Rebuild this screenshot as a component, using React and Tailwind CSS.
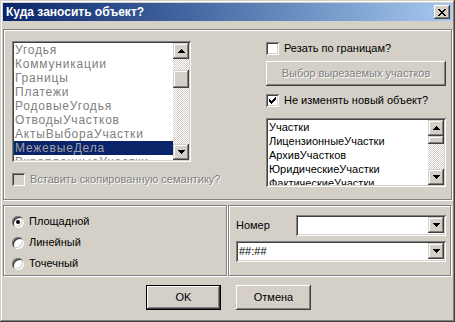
const raised = 'shadow-[inset_-1px_-1px_#404040,inset_1px_1px_#fff,inset_-2px_-2px_#808080,inset_2px_2px_#d4d0c8]';
const raisedScroll = 'shadow-[inset_-1px_-1px_#404040,inset_1px_1px_#d4d0c8,inset_-2px_-2px_#808080,inset_2px_2px_#fff]';
const sunken = 'shadow-[inset_1px_1px_#808080,inset_-1px_-1px_#fff,inset_2px_2px_#404040,inset_-2px_-2px_#d4d0c8]';
const etched = 'border border-[#808080] shadow-[inset_1px_1px_#fff,1px_1px_#fff]';
const dither = 'bg-[repeating-conic-gradient(#d4d0c8_0_25%,#fff_0_50%)] bg-[length:2px_2px]';
const disabledText = 'text-[#808080] [text-shadow:1px_1px_0_#fff]';

function Pixels({ rows, color = '#000' }) {
    const h = rows.length;
    const w = rows[0].length;
    return (
        <svg width={w} height={h} viewBox={`0 0 ${w} ${h}`} shapeRendering="crispEdges">
            {rows.map((r, y) =>
                r.split('').map((c, x) => (c === 'x' ? <rect key={`${x}-${y}`} x={x} y={y} width="1" height="1" fill={color} /> : null))
            )}
        </svg>
    );
}

const UP = ['...x...', '..xxx..', '.xxxxx.', 'xxxxxxx'];
const DOWN = ['xxxxxxx', '.xxxxx.', '..xxx..', '...x...'];
const CLOSE = ['xx....xx', '.xx..xx.', '..xxxx..', '...xx...', '..xxxx..', '.xx..xx.', 'xx....xx'];
const CHECK = ['......x', '.....xx', 'x...xxx', 'xx.xxx.', 'xxxxx..', '.xxx...', '..x....'];

function ScrollBtn({ dir }) {
    return (
        <div className={`w-[16px] h-[16px] shrink-0 bg-[#d4d0c8] flex items-center justify-center ${raisedScroll}`}>
            <Pixels rows={dir === 'up' ? UP : DOWN} />
        </div>
    );
}

function Scrollbar({ before, thumb }) {
    return (
        <div className="w-[16px] flex flex-col shrink-0">
            <ScrollBtn dir="up" />
            <div className={`${dither}`} style={{ height: before }} />
            <div className={`w-[16px] bg-[#d4d0c8] ${raisedScroll}`} style={{ height: thumb }} />
            <div className={`flex-1 ${dither}`} />
            <ScrollBtn dir="down" />
        </div>
    );
}

function Checkbox({ label, checked, disabled }) {
    return (
        <div className="flex items-center h-[13px]">
            <div className={`w-[13px] h-[13px] p-[3px] shrink-0 ${disabled ? 'bg-[#d4d0c8]' : 'bg-white'} ${sunken}`}>
                {checked && <Pixels rows={CHECK} />}
            </div>
            <span className={`ml-[5px] whitespace-nowrap ${disabled ? disabledText : 'text-black'}`}>{label}</span>
        </div>
    );
}

function Radio({ label, checked }) {
    return (
        <div className="flex items-center h-[13px]">
            <div className="w-[12px] h-[12px] rounded-full bg-white shrink-0 flex items-center justify-center shadow-[inset_1px_1px_#808080,inset_-1px_-1px_#fff,inset_2px_2px_#404040,inset_-2px_-2px_#d4d0c8]">
                {checked && <div className="w-[4px] h-[4px] rounded-full bg-black" />}
            </div>
            <span className="ml-[5px] whitespace-nowrap">{label}</span>
        </div>
    );
}

function Combo({ width, value }) {
    return (
        <div className={`h-[21px] p-[2px] bg-white flex ${sunken}`} style={{ width }}>
            <div className="flex-1 pl-[1px] leading-[17px] overflow-hidden whitespace-nowrap">{value}</div>
            <ScrollBtn dir="down" />
        </div>
    );
}

const leftItems = ['Угодья', 'Коммуникации', 'Границы', 'Платежи', 'РодовыеУгодья', 'ОтводыУчастков', 'АктыВыбораУчастки', 'МежевыеДела', 'ВкрапленныеУчастки'];
const rightItems = ['Участки', 'ЛицензионныеУчастки', 'АрхивУчастков', 'ЮридическиеУчастки', 'ФактическиеУчастки'];

export default function App() {
    return (
        <div className="w-[455px] h-[322px] bg-[#d4d0c8] pt-[3px] px-[3px] flex flex-col text-[11px] text-black font-['Liberation_Sans',Arial,sans-serif] shadow-[inset_-1px_-1px_#404040,inset_1px_1px_#d4d0c8,inset_-2px_-2px_#808080,inset_2px_2px_#fff] overflow-hidden">
            {/* Title bar */}
            <div className="h-[18px] shrink-0 flex items-center justify-between pl-[3px] pr-[2px] bg-gradient-to-r from-[#0a246a] to-[#a6caf0]">
                <span className="text-white font-bold text-[12px] leading-[18px] whitespace-nowrap">Куда заносить объект?</span>
                <div className={`w-[16px] h-[14px] bg-[#d4d0c8] flex items-center justify-center ${raised}`}>
                    <Pixels rows={CLOSE} />
                </div>
            </div>

            {/* Top group */}
            <div className={`mt-[8px] h-[171px] shrink-0 ${etched} flex pl-[8px] pt-[11px]`}>
                <div className="w-[179px] flex flex-col">
                    <div className={`h-[121px] p-[2px] bg-white flex ${sunken}`}>
                        <div className="flex-1 overflow-hidden text-[#808080] text-[12px] tracking-[0.8px]">
                            {leftItems.map((it, i) => (
                                <div key={it} className={`h-[14px] leading-[14px] pl-[1px] whitespace-nowrap ${i === 7 ? 'bg-[#0a246a] text-[#a0a0a8]' : ''}`}>{it}</div>
                            ))}
                        </div>
                        <Scrollbar before={11} thumb={18} />
                    </div>
                    <div className="mt-[11px]">
                        <Checkbox label="Вставить скопированную семантику?" disabled />
                    </div>
                </div>

                <div className="ml-[75px] w-[180px] flex flex-col">
                    <div className="mt-[1px]">
                        <Checkbox label="Резать по границам?" />
                    </div>
                    <div className={`mt-[6px] h-[25px] flex items-center justify-center ${raised} ${disabledText}`}>
                        Выбор вырезаемых участков
                    </div>
                    <div className="mt-[8px]">
                        <Checkbox label="Не изменять новый объект?" checked />
                    </div>
                    <div className={`mt-[11px] h-[69px] p-[2px] bg-white flex ${sunken}`}>
                        <div className="flex-1 overflow-hidden">
                            {rightItems.map(it => (
                                <div key={it} className="h-[14px] leading-[14px] pl-[1px] whitespace-nowrap">{it}</div>
                            ))}
                        </div>
                        <Scrollbar before={0} thumb={8} />
                    </div>
                </div>
            </div>

            {/* Bottom groups */}
            <div className="mt-[5px] h-[71px] shrink-0 flex">
                <div className={`w-[224px] ${etched} pl-[8px] pt-[9px] flex flex-col gap-[8px]`}>
                    <Radio label="Площадной" checked />
                    <Radio label="Линейный" />
                    <Radio label="Точечный" />
                </div>
                <div className={`ml-[1px] flex-1 mr-[1px] ${etched} pl-[7px] pt-[9px] flex flex-col`}>
                    <div className="flex items-center justify-between pr-[4px]">
                        <span>Номер</span>
                        <Combo width={150} value="" />
                    </div>
                    <div className="mt-[5px]">
                        <Combo width={210} value="##:##" />
                    </div>
                </div>
            </div>

            {/* Buttons */}
            <div className="mt-[9px] flex pl-[143px] gap-[15px]">
                <div className="w-[75px] h-[25px] border border-black">
                    <div className={`w-full h-full flex items-center justify-center ${raised}`}>OK</div>
                </div>
                <div className={`w-[75px] h-[25px] flex items-center justify-center ${raised}`}>Отмена</div>
            </div>
        </div>
    );
}
